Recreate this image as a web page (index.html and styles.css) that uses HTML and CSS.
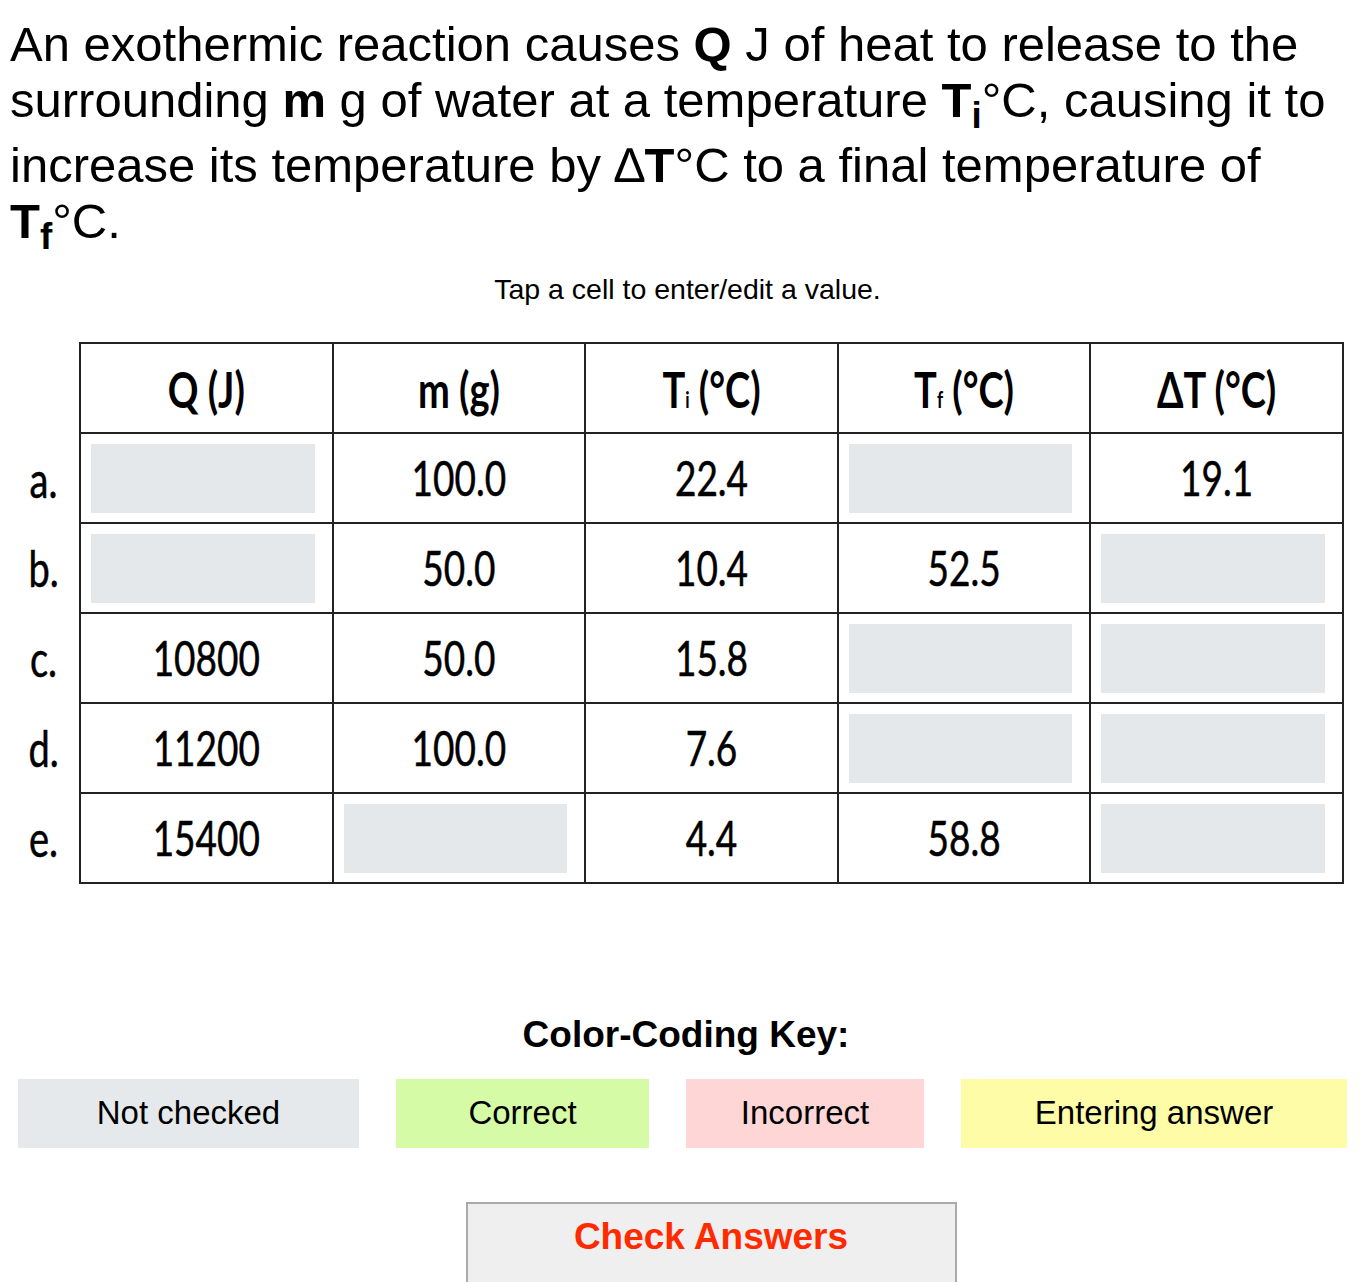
FILE: index.html
```html
<!DOCTYPE html>
<html>
<head>
<meta charset="utf-8">
<link rel="stylesheet" href="styles.css">
</head>
<body>
<p class="prompt">An exothermic reaction causes <b>Q</b> J of heat to release to the surrounding <b>m</b> g of water at a temperature <b>T<sub>i</sub></b>°C, causing it to increase its temperature by ∆<b>T</b>°C to a final temperature of <b>T<sub>f</sub></b>°C.</p>
<p class="hint">Tap a cell to enter/edit a value.</p>
<table class="grid">
  <tr>
    <td class="label"></td>
    <th><span class="t">Q (J)</span></th>
    <th><span class="t">m (g)</span></th>
    <th><span class="t">T<span class="sm">i</span> (°C)</span></th>
    <th><span class="t">T<span class="sm">f</span> (°C)</span></th>
    <th><span class="t">ΔT (°C)</span></th>
  </tr>
  <tr>
    <td class="label"><span class="t">a.</span></td>
    <td><div class="inp"></div></td>
    <td><span class="t">100.0</span></td>
    <td><span class="t">22.4</span></td>
    <td><div class="inp"></div></td>
    <td><span class="t">19.1</span></td>
  </tr>
  <tr>
    <td class="label"><span class="t">b.</span></td>
    <td><div class="inp"></div></td>
    <td><span class="t">50.0</span></td>
    <td><span class="t">10.4</span></td>
    <td><span class="t">52.5</span></td>
    <td><div class="inp"></div></td>
  </tr>
  <tr>
    <td class="label"><span class="t">c.</span></td>
    <td><span class="t">10800</span></td>
    <td><span class="t">50.0</span></td>
    <td><span class="t">15.8</span></td>
    <td><div class="inp"></div></td>
    <td><div class="inp"></div></td>
  </tr>
  <tr>
    <td class="label"><span class="t">d.</span></td>
    <td><span class="t">11200</span></td>
    <td><span class="t">100.0</span></td>
    <td><span class="t">7.6</span></td>
    <td><div class="inp"></div></td>
    <td><div class="inp"></div></td>
  </tr>
  <tr>
    <td class="label"><span class="t">e.</span></td>
    <td><span class="t">15400</span></td>
    <td><div class="inp"></div></td>
    <td><span class="t">4.4</span></td>
    <td><span class="t">58.8</span></td>
    <td><div class="inp"></div></td>
  </tr>
</table>
<h2 class="key-title">Color-Coding Key:</h2>
<div class="key">
  <div class="chip gray">Not checked</div>
  <div class="chip green">Correct</div>
  <div class="chip pink">Incorrect</div>
  <div class="chip yellow">Entering answer</div>
</div>
<div class="actions">
  <button class="check">Check Answers</button>
</div>
</body>
</html>
```

FILE: styles.css
```css
body {
  margin: 8px;
  background: #fff;
  color: #000;
  font-family: "Liberation Sans", Arial, sans-serif;
}
.prompt {
  margin: 8px 0 0 2px;
  font-size: 49px;
  line-height: 56px;
}
.prompt sub {
  font-size: 0.75em;
  line-height: normal;
}
.hint {
  margin: 11px 0 0;
  padding-left: 15px;
  text-align: center;
  font-size: 28.5px;
  line-height: 40px;
}
.grid {
  margin-top: 33px;
  border-collapse: collapse;
  font-family: Lato, "Noto Sans", sans-serif;
  color: #000;
}
.grid th, .grid td {
  border: 2px solid #222;
  width: 250.6px;
  height: 88px;
  padding: 0;
  text-align: center;
  vertical-align: middle;
  font-size: 37px;
}
.grid th {
  font-weight: 700;
  font-size: 38px;
}
.grid td {
  font-weight: 400;
  -webkit-text-stroke: 0.4px #000;
}
.grid td.label {
  border: none;
  border-right: 2px solid #222;
  width: 71px;
  font-size: 38px;
}
.t {
  display: inline-block;
  transform: scaleY(1.3);
}
.sm {
  font-size: 0.45em;
}
.inp {
  background: #e5e8eb;
  height: 69px;
  margin: 1px 17px 0 10px;
}
.key-title {
  margin: 129px 0 0;
  padding-left: 12px;
  text-align: center;
  font-size: 37px;
  line-height: 44px;
}
.key {
  margin-top: 22px;
  display: flex;
  gap: 37px;
  padding-left: 10px;
}
.chip {
  height: 69px;
  display: flex;
  align-items: center;
  justify-content: center;
  font-size: 33px;
}
.gray { background: #e6e9ec; width: 341px; }
.green { background: #d6fba6; width: 253px; }
.pink { background: #ffd6d6; width: 238px; }
.yellow { background: #fffca8; width: 386px; }
.actions {
  margin-top: 54px;
  display: flex;
  justify-content: center;
  padding-left: 62px;
}
.check {
  width: 491px;
  height: 100px;
  background: #efefef;
  border: 2px solid #aaa;
  color: #ff2a00;
  font-family: "Liberation Sans", Arial, sans-serif;
  font-weight: 700;
  font-size: 37px;
  padding: 12px 0 0;
  display: flex;
  justify-content: center;
  align-items: flex-start;
}
```
